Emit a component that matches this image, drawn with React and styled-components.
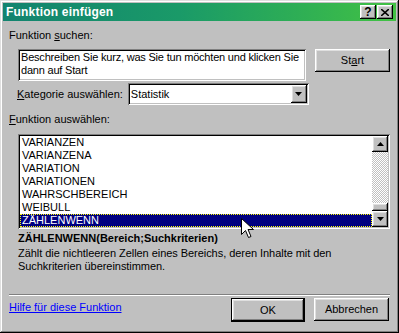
import React from 'react'
import styled, { createGlobalStyle } from 'styled-components'

const GlobalStyle = createGlobalStyle`
  body {
    margin: 0;
    font-family: "Liberation Sans", Arial, sans-serif;
    font-size: 11px;
    background: #c0c0c0;
  }
`

const sunken = `
  box-shadow: inset 1px 1px #808080, inset -1px -1px #fff,
    inset 2px 2px #000, inset -2px -2px #c0c0c0;
`
const raised = `
  box-shadow: inset -1px -1px #000, inset 1px 1px #fff,
    inset -2px -2px #808080, inset 2px 2px #dfdfdf;
`

const Window = styled.div`
  position: relative;
  box-sizing: border-box;
  width: 399px;
  height: 333px;
  padding: 3px;
  background: #c0c0c0;
  box-shadow: inset -1px -1px #000, inset 1px 1px #dfdfdf,
    inset -2px -2px #808080, inset 2px 2px #fff;
  display: flex;
  flex-direction: column;
`

const TitleBar = styled.div`
  height: 18px;
  display: flex;
  align-items: center;
  padding: 0 3px;
  background: linear-gradient(to right, #12836f, #1a9a68 45%, #2eae55 75%, #42c244);
`

const TitleText = styled.div`
  flex: 1;
  color: #fff;
  font-weight: bold;
  font-size: 12px;
  letter-spacing: 0.2px;
`

const CaptionButton = styled.div`
  width: 16px;
  height: 14px;
  margin-left: ${p => p.$gap || 0}px;
  background: #c0c0c0;
  ${raised}
  display: flex;
  align-items: center;
  justify-content: center;
  font-weight: bold;
  font-size: 12px;
  color: #000;
  line-height: 1;
`

const Content = styled.div`
  flex: 1;
  display: flex;
  flex-direction: column;
  padding: 0 6px 0 6px;
  line-height: 13px;
`

const Label = styled.div`
  margin-top: ${p => p.$top || 0}px;
  margin-left: ${p => p.$indent || 0}px;
  color: #000;
  white-space: nowrap;
`

const SearchRow = styled.div`
  display: flex;
  align-items: flex-start;
  margin-top: 7px;
  margin-left: 9px;
  gap: 9px;
`

const TextBox = styled.div`
  box-sizing: border-box;
  width: 288px;
  height: 32px;
  padding: 2px 3px;
  background: #fff;
  ${sunken}
  white-space: nowrap;
  letter-spacing: -0.2px;
`

const Button = styled.div`
  box-sizing: border-box;
  width: ${p => p.$w || 75}px;
  height: 23px;
  display: flex;
  align-items: center;
  justify-content: center;
  background: #c0c0c0;
  color: #000;
  ${raised}
  ${p => p.$default && `
    border: 1px solid #000;
    height: 24px;
  `}
`

const CategoryRow = styled.div`
  display: flex;
  align-items: center;
  margin-top: 2px;
  margin-left: 8px;
  gap: 5px;
`

const Select = styled.div`
  box-sizing: border-box;
  width: 181px;
  height: 22px;
  padding: 2px;
  display: flex;
  align-items: center;
  background: #fff;
  ${sunken}
`

const SelectValue = styled.div`
  flex: 1;
  padding-left: 1px;
`

const ArrowButton = styled.div`
  width: 16px;
  height: 18px;
  display: flex;
  align-items: center;
  justify-content: center;
  background: #c0c0c0;
  ${raised}
`

const ListBox = styled.div`
  box-sizing: border-box;
  margin-top: 8px;
  margin-left: 9px;
  width: 372px;
  height: 95px;
  padding: 2px;
  display: flex;
  background: #fff;
  ${sunken}
`

const Rows = styled.div`
  flex: 1;
  display: flex;
  flex-direction: column;
`

const Row = styled.div`
  height: 13px;
  padding-left: 2px;
  line-height: 13px;
  color: #000;
  ${p => p.$selected && `
    background: #000080;
    color: #fff;
    outline: 1px dotted #ffff00;
    outline-offset: -1px;
  `}
`

const ScrollBar = styled.div`
  width: 16px;
  display: flex;
  flex-direction: column;
  background: repeating-conic-gradient(#c0c0c0 0% 25%, #fff 0% 50%) 0 0 / 2px 2px;
`

const ScrollButton = styled.div`
  height: 16px;
  display: flex;
  align-items: center;
  justify-content: center;
  background: #c0c0c0;
  ${raised}
`

const Thumb = styled.div`
  height: 8px;
  margin-top: auto;
  background: #c0c0c0;
  ${raised}
`

const FunctionTitle = styled.div`
  margin-top: 3px;
  margin-left: 9px;
  font-weight: bold;
  color: #000;
`

const Description = styled.div`
  margin-top: 2px;
  margin-left: 9px;
  color: #000;
  letter-spacing: -0.05px;
`

const Separator = styled.div`
  margin-top: auto;
  height: 0;
  border-top: 1px solid #808080;
  border-bottom: 1px solid #fff;
`

const BottomRow = styled.div`
  display: flex;
  align-items: flex-start;
  margin-top: 2px;
  margin-bottom: 8px;
  padding-right: 1px;
  gap: 9px;
`

const HelpLink = styled.a`
  flex: 1;
  margin-top: 3px;
  color: #0000ff;
  text-decoration: underline;
  cursor: pointer;
`

const Pointer = styled.svg`
  position: absolute;
  left: 241px;
  top: 218px;
`

const DownTriangle = () => (
  <svg width="7" height="4" viewBox="0 0 7 4"><path d="M0 0h7L3.5 4z" fill="#000" /></svg>
)
const UpTriangle = () => (
  <svg width="7" height="4" viewBox="0 0 7 4"><path d="M0 4h7L3.5 0z" fill="#000" /></svg>
)

const functions = [
  'VARIANZEN',
  'VARIANZENA',
  'VARIATION',
  'VARIATIONEN',
  'WAHRSCHBEREICH',
  'WEIBULL',
  'ZÄHLENWENN',
]

export default function App() {
  return (
    <>
      <GlobalStyle />
      <Window>
        <TitleBar>
          <TitleText>Funktion einfügen</TitleText>
          <CaptionButton>?</CaptionButton>
          <CaptionButton $gap={1}>
            <svg width="8" height="7" viewBox="0 0 8 7">
              <path d="M0 0l8 7M8 0L0 7" stroke="#000" strokeWidth="1.6" />
            </svg>
          </CaptionButton>
        </TitleBar>
        <Content>
          <Label $top={8}>Funktion <u>s</u>uchen:</Label>
          <SearchRow>
            <TextBox>
              Beschreiben Sie kurz, was Sie tun möchten und klicken Sie<br />
              dann auf Start
            </TextBox>
            <Button>St<u>a</u>rt</Button>
          </SearchRow>
          <CategoryRow>
            <Label><u>K</u>ategorie auswählen:</Label>
            <Select>
              <SelectValue>Statistik</SelectValue>
              <ArrowButton><DownTriangle /></ArrowButton>
            </Select>
          </CategoryRow>
          <Label $top={8}><u>F</u>unktion auswählen:</Label>
          <ListBox>
            <Rows>
              {functions.map(f => (
                <Row key={f} $selected={f === 'ZÄHLENWENN'}>{f}</Row>
              ))}
            </Rows>
            <ScrollBar>
              <ScrollButton><UpTriangle /></ScrollButton>
              <Thumb />
              <ScrollButton><DownTriangle /></ScrollButton>
            </ScrollBar>
          </ListBox>
          <FunctionTitle>ZÄHLENWENN(Bereich;Suchkriterien)</FunctionTitle>
          <Description>
            Zählt die nichtleeren Zellen eines Bereichs, deren Inhalte mit den<br />
            Suchkriterien übereinstimmen.
          </Description>
          <Separator />
          <BottomRow>
            <HelpLink>Hilfe für diese Funktion</HelpLink>
            <Button $default $w={74}>OK</Button>
            <Button>Abbrechen</Button>
          </BottomRow>
        </Content>
        <Pointer width="13" height="21" viewBox="0 0 13 21">
          <path d="M0.5 0.5v16l4-4 3 7 2.5-1-3-7h5.5z" fill="#fff" stroke="#000" strokeWidth="1" />
        </Pointer>
      </Window>
    </>
  )
}
